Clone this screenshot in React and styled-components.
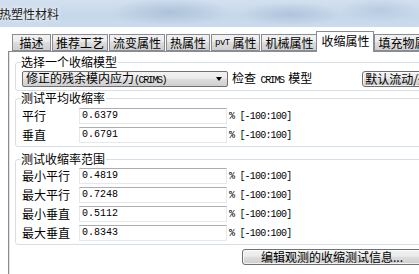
import React from "react";
import styled, { createGlobalStyle } from "styled-components";

const Global = createGlobalStyle`
  html, body { margin: 0; padding: 0; background: #fff; overflow: hidden; }
  body { width: 419px; height: 274px; font-family: "Noto Sans CJK SC", "Liberation Sans", sans-serif; font-size: 12px; color: #000; }
  * { box-sizing: border-box; }
`;

const Window = styled.div`
  width: 419px;
  height: 274px;
  overflow: hidden;
  display: flex;
  flex-direction: column;
  background: #fff;
`;

const TitleBar = styled.div`
  height: 27px;
  flex: none;
  display: flex;
  align-items: center;
  background:
    radial-gradient(ellipse 60px 14px at 170px 12px, rgba(150,175,205,0.55), transparent),
    radial-gradient(ellipse 50px 12px at 290px 14px, rgba(150,175,205,0.5), transparent),
    radial-gradient(ellipse 40px 12px at 380px 10px, rgba(160,185,212,0.45), transparent),
    linear-gradient(180deg, #d3e0ef 0%, #c6d7ea 60%, #ccdcee 100%);
`;

const Title = styled.span`
  margin-left: -1px;
  font-size: 12px;
  line-height: 14px;
  color: #1a1a1a;
  text-shadow: 0 0 6px rgba(255,255,255,0.9), 0 0 3px rgba(255,255,255,0.9);
`;

const Body = styled.div`
  flex: 1;
  display: flex;
  flex-direction: column;
  padding: 4px 0 0 8px;
  width: 520px;
`;

const TabStrip = styled.div`
  display: flex;
  align-items: flex-end;
  gap: 1px;
  padding-left: 4px;
  height: 20px;
  position: relative;
  z-index: 1;
`;

const Tab = styled.div`
  flex: none;
  min-width: ${(p) => p.$min || 0}px;
  height: ${(p) => (p.$active ? 21 : 17)}px;
  margin-bottom: ${(p) => (p.$active ? -1 : 0)}px;
  padding: ${(p) => (p.$active ? "2px 4px 0" : "0 3px")};
  margin-left: ${(p) => (p.$active ? -2 : 0)}px;
  margin-right: ${(p) => (p.$active ? -1 : 0)}px;
  display: flex;
  align-items: ${(p) => (p.$active ? "flex-start" : "center")};
  justify-content: center;
  border: 1px solid #898c95;
  border-bottom: ${(p) => (p.$active ? "none" : "1px solid #898c95")};
  background: ${(p) =>
    p.$active ? "#fff" : "linear-gradient(180deg, #f2f2f2 0%, #ebebeb 45%, #dddddd 50%, #cfcfcf 100%)"};
  font-size: 12px;
  line-height: 14px;
  white-space: nowrap;
`;

const Ascii = styled.span`
  font-family: "Liberation Mono", monospace;
  font-size: ${(p) => p.$size || 10}px;
  letter-spacing: ${(p) => p.$ls ?? -1.4}px;
`;

const Panel = styled.div`
  flex: 1;
  border-left: 1px solid #898c95;
  border-top: 1px solid #898c95;
  box-shadow: inset 1px 0 0 #e3e3e3;
  padding: 3px 0 0 6px;
  display: flex;
  flex-direction: column;
  align-items: flex-start;
`;

const Group = styled.fieldset`
  margin: ${(p) => p.$mt || 0}px 0 0 0;
  width: 500px;
  border: 1px solid #d5dfe5;
  border-radius: 3px;
  padding: ${(p) => p.$pt || 2}px 0 ${(p) => p.$pb || 2}px 6px;
  display: flex;
  flex-direction: column;
  gap: 3px;
  min-width: 0;
`;

const Legend = styled.legend`
  padding: 0 1px 0 0;
  margin-left: -1px;
  font-size: 12px;
  line-height: 14px;
`;

const ModelRow = styled.div`
  display: flex;
  align-items: center;
  height: 16px;
`;

const Combo = styled.div`
  width: 206px;
  height: 16px;
  display: flex;
  align-items: center;
  border: 1px solid #707070;
  border-radius: 2px;
  background: linear-gradient(180deg, #f2f2f2 0%, #ebebeb 45%, #dddddd 50%, #cfcfcf 100%);
  padding-left: 3px;
  font-size: 12px;
  line-height: 14px;
  white-space: nowrap;
`;

const ComboText = styled.span`
  flex: 1;
`;

const Arrow = styled.span`
  width: 10px;
  display: flex;
  justify-content: center;
  margin-right: 3px;
  &::before {
    content: "";
    border-left: 3px solid transparent;
    border-right: 3px solid transparent;
    border-top: 4px solid #000;
  }
`;

const Check = styled.span`
  margin-left: 4px;
  font-size: 12px;
  line-height: 14px;
  white-space: nowrap;
`;

const Button = styled.div`
  flex: none;
  width: ${(p) => p.$w}px;
  height: ${(p) => p.$h || 16}px;
  margin-left: ${(p) => p.$ml || 0}px;
  margin-top: ${(p) => p.$mt || 0}px;
  border: 1px solid #707070;
  border-radius: 3px;
  background: linear-gradient(180deg, #f2f2f2 0%, #ebebeb 45%, #dddddd 50%, #cfcfcf 100%);
  box-shadow: inset 0 0 0 1px rgba(255,255,255,0.7);
  display: flex;
  align-items: center;
  justify-content: ${(p) => (p.$left ? "flex-start" : "center")};
  padding-left: ${(p) => (p.$left ? 2 : 0)}px;
  font-size: 12px;
  line-height: 14px;
  white-space: nowrap;
  overflow: hidden;
`;

const Row = styled.div`
  display: flex;
  align-items: center;
  height: 16px;
`;

const Label = styled.span`
  width: 57px;
  font-size: 12px;
  line-height: 14px;
`;

const Input = styled.div`
  width: 148px;
  height: 16px;
  border: 1px solid #e3e9ef;
  border-top-color: #abadb3;
  display: flex;
  align-items: center;
  padding-left: 2px;
  font-family: "Liberation Mono", monospace;
  font-size: 10px;
  line-height: 12px;
  background: #fff;
`;

const Range = styled.span`
  margin-left: 2px;
  font-family: "Liberation Mono", monospace;
  font-size: 10px;
  letter-spacing: -0.8px;
  white-space: nowrap;
`;

const avg = [
  ["平行", "0.6379"],
  ["垂直", "0.6791"],
];
const range = [
  ["最小平行", "0.4819"],
  ["最大平行", "0.7248"],
  ["最小垂直", "0.5112"],
  ["最大垂直", "0.8343"],
];

const Field = ({ label, value }) => (
  <Row>
    <Label>{label}</Label>
    <Input>{value}</Input>
    <Range>% [-100:100]</Range>
  </Row>
);

export default function App() {
  return (
    <Window>
      <Global />
      <TitleBar>
        <Title>热塑性材料</Title>
      </TitleBar>
      <Body>
        <TabStrip>
          <Tab $min={39}>描述</Tab>
          <Tab>推荐工艺</Tab>
          <Tab>流变属性</Tab>
          <Tab>热属性</Tab>
          <Tab>
            <Ascii $size={9} $ls={-0.5}>pvT</Ascii>&nbsp;属性
          </Tab>
          <Tab>机械属性</Tab>
          <Tab $active>收缩属性</Tab>
          <Tab>填充物属性</Tab>
        </TabStrip>
        <Panel>
          <Group $pt={2} $pb={3}>
            <Legend>选择一个收缩模型</Legend>
            <ModelRow>
              <Combo>
                <ComboText>
                  修正的残余模内应力<Ascii>(CRIMS)</Ascii>
                </ComboText>
                <Arrow />
              </Combo>
              <Check>
                检查<Ascii> CRIMS </Ascii>模型
              </Check>
              <Button $w={80} $ml={50} $left>
                默认流动/残余应力
              </Button>
            </ModelRow>
          </Group>
          <Group $pt={3} $pb={3}>
            <Legend>测试平均收缩率</Legend>
            {avg.map(([l, v]) => (
              <Field key={l} label={l} value={v} />
            ))}
          </Group>
          <Group $mt={5} $pt={2} $pb={3}>
            <Legend>测试收缩率范围</Legend>
            {range.map(([l, v]) => (
              <Field key={l} label={l} value={v} />
            ))}
          </Group>
          <Button $w={180} $ml={227} $mt={4}>
            编辑观测的收缩测试信息...
          </Button>
        </Panel>
      </Body>
    </Window>
  );
}
